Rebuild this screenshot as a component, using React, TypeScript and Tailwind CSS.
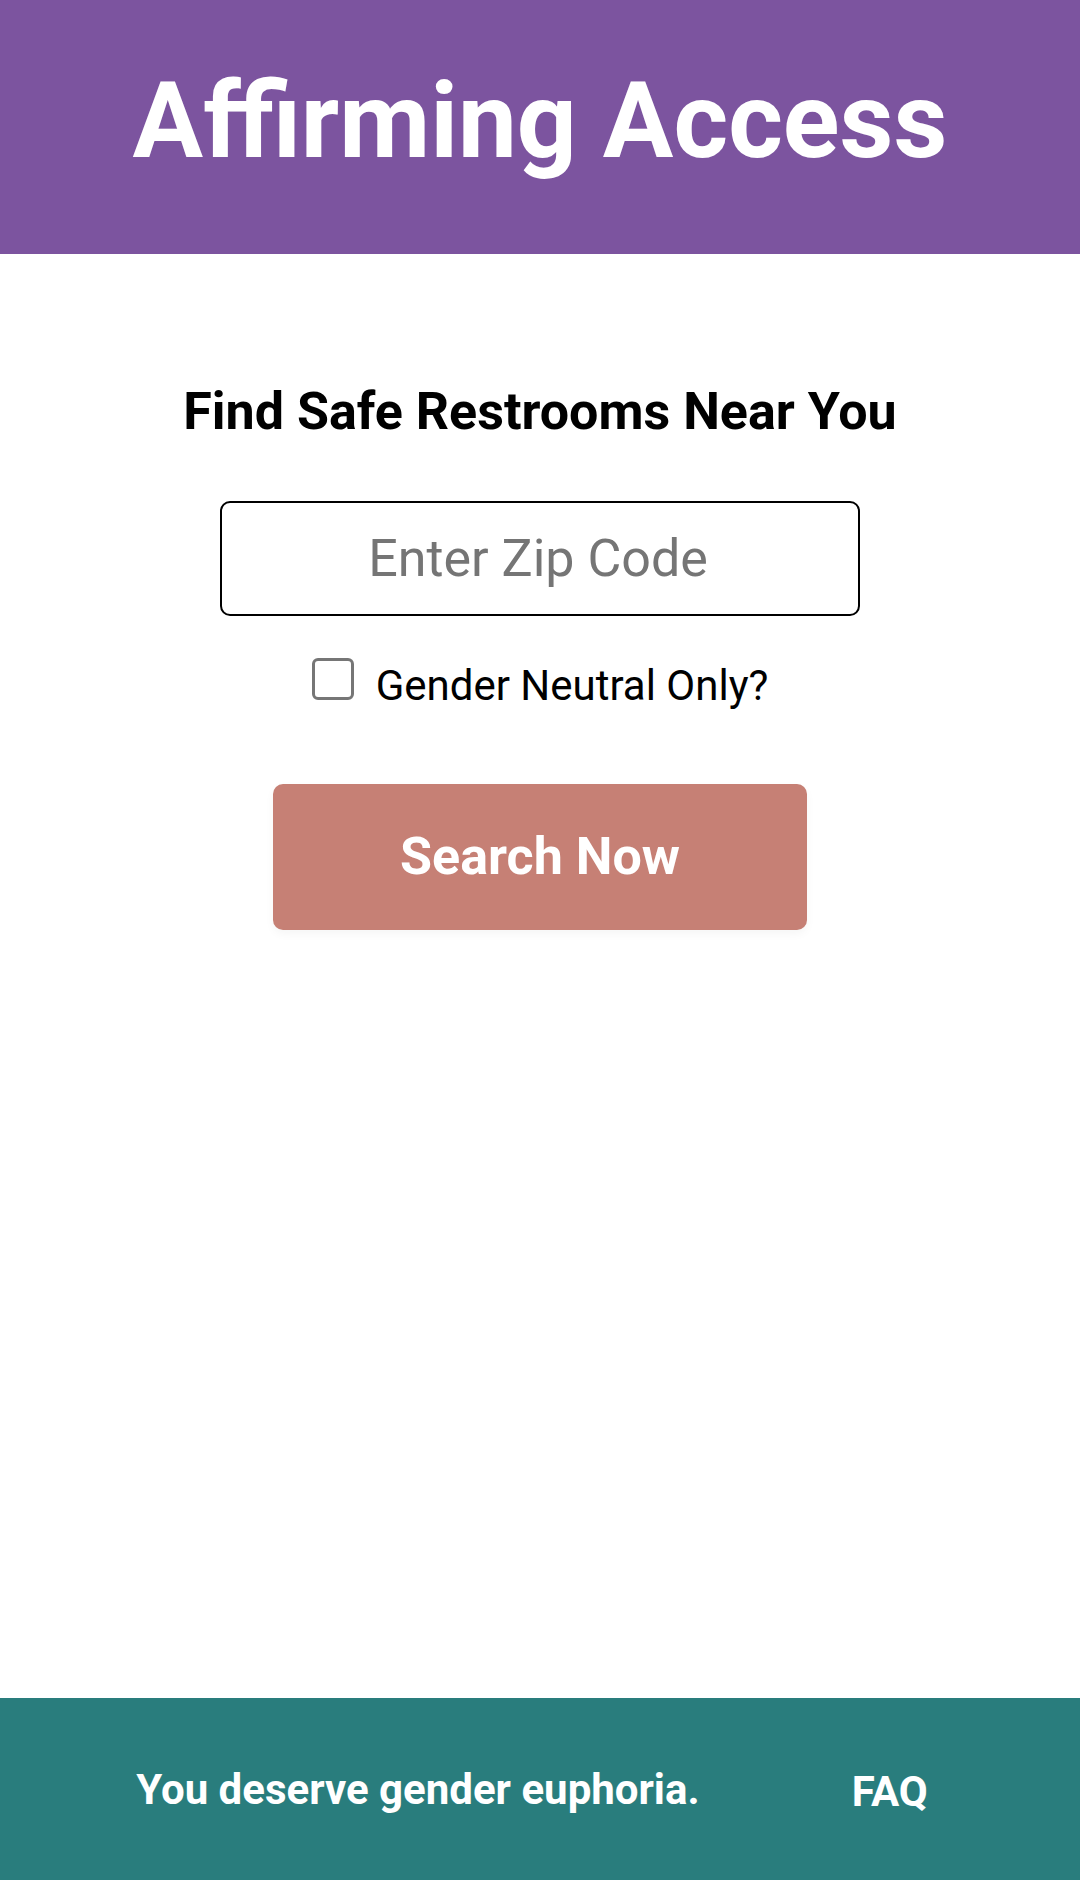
export default function App() {
  return (
    <div className="flex min-h-screen flex-col bg-white font-['Roboto',sans-serif] text-black">
      <header className="bg-[#7c549f] px-6 pt-[62px] pb-[72px] text-center text-white">
        <h1 className="text-[105px] leading-[120px] font-bold">Affirming Access</h1>
      </header>
      <main className="flex flex-1 flex-col items-center px-6 pt-[126px]">
        <h2 className="text-center text-[52px] leading-[64px] font-bold">Find Safe Restrooms Near You</h2>
        <form className="flex w-full flex-col items-center" onSubmit={(e) => e.preventDefault()}>
          <input
            type="text"
            aria-label="Enter Zip Code"
            placeholder="Enter Zip Code"
            className="mt-[57px] h-[115px] w-full max-w-[640px] rounded-[10px] border-2 border-black bg-white pr-3 pl-2 text-center text-[52px] placeholder:text-[#757575]"
          />
          <label className="mt-[42px] flex items-start gap-[22px] text-[42px] leading-[56px]">
            <input
              type="checkbox"
              className="size-[42px] appearance-none rounded-[6px] border-[3px] border-[#767676] bg-white checked:bg-[#767676]"
            />
            Gender Neutral Only?
          </label>
          <button
            type="submit"
            className="mt-[70px] h-[146px] w-full max-w-[534px] rounded-[10px] bg-[#c68075] text-[52px] font-bold text-white shadow-[0_4px_10px_rgba(0,0,0,0.04)]"
          >
            Search Now
          </button>
        </form>
      </main>
      <footer className="flex h-[182px] items-center justify-center gap-[152px] bg-[#297d7d] pr-10 pl-6 text-[42px] font-bold text-white">
        <p>You deserve gender euphoria.</p>
        <a href="#faq" className="pt-1">FAQ</a>
      </footer>
    </div>
  );
}
